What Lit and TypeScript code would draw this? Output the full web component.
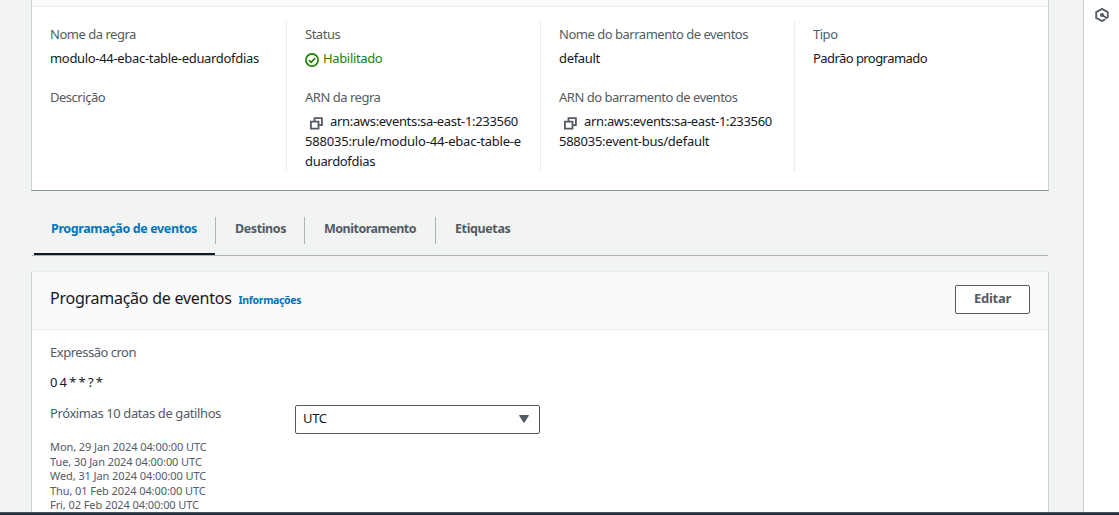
import { LitElement, html, css } from "lit";
import { customElement } from "lit/decorators.js";

const copyIcon = html`<svg class="copy" viewBox="0 0 14 14" width="14" height="14" fill="none" stroke="#545b64" stroke-width="1.8">
  <path d="M.9 4.6h7.6v7.1H.9zM4.5 4.6V1.1h7.4v7H8.6" />
</svg>`;

const dates = [
  "Mon, 29 Jan 2024 04:00:00 UTC",
  "Tue, 30 Jan 2024 04:00:00 UTC",
  "Wed, 31 Jan 2024 04:00:00 UTC",
  "Thu, 01 Feb 2024 04:00:00 UTC",
  "Fri, 02 Feb 2024 04:00:00 UTC",
];

@customElement("app-root")
export class AppRoot extends LitElement {
  static styles = css`
    :host {
      display: flex;
      flex-direction: column;
      width: 100%;
      height: 515px;
      overflow: hidden;
      background: #f2f3f3;
      color: #16191f;
      font: 13px/20px "Noto Sans", "Open Sans", sans-serif;
      letter-spacing: -0.32px;
    }
    * { box-sizing: border-box; }
    svg { display: block; flex: none; }
    .shell { display: flex; height: 512px; overflow: hidden; }
    .main { flex: 1; padding: 0 34px 0 31px; min-width: 0; }
    .side {
      width: 36px;
      flex: none;
      background: #fff;
      border-left: 1px solid #c6cccc;
      padding: 8px 0 0 11px;
    }
    .footer { height: 3px; background: #232f3e; border-top: 1px solid #4b5665; }
    .card {
      background: #fff;
      border: 1px solid #c9d0d1;
      border-top-color: #eaeded;
    }
    .summary { height: 191px; border-top: 0; border-bottom-color: #879596; }
    .strip { height: 7px; background: #fafafa; border-bottom: 1px solid #eaeded; }
    .cols { display: grid; grid-template-columns: 255px 254px 254px 1fr; padding-top: 14px; }
    .col { height: 151px; border-right: 1px solid #eaeded; padding: 3px 0 0 18px; }
    .col:last-child { border: 0; }
    .col div + .label { margin-top: 19px; }
    .label { color: #545b64; letter-spacing: -0.48px; }
    .value { margin-top: 4px; }
    .ok { display: flex; gap: 4px; color: #1d8102; letter-spacing: -0.35px; }
    .ok svg { margin-top: 5px; }
    .line { white-space: pre; }
    .loose { letter-spacing: -0.2px; }
    .bus { letter-spacing: -0.25px; }
    .tight { letter-spacing: -0.56px; }
    .first { display: flex; padding-left: 5px; gap: 6px; }
    .copy { margin-top: 6px; }
    .tabs {
      display: flex;
      margin: 26px 1px 0;
      height: 39px;
      border-bottom: 1px solid #aab7b8;
      font-size: 12.5px;
      font-weight: 700;
      letter-spacing: -0.4px;
      color: #545b64;
      padding-left: 2px;
    }
    .tab { position: relative; height: 38px; padding-top: 2px; padding-left: 19px; white-space: nowrap; }
    .tab:not(:last-child)::after {
      content: "";
      position: absolute;
      right: 0;
      top: 0;
      width: 1px;
      height: 27px;
      background: #aab7b8;
    }
    .active { width: 182px; padding-left: 17px; color: #0073bb; letter-spacing: -0.38px; }
    .active::before {
      content: "";
      position: absolute;
      left: 0;
      right: 1px;
      top: 36px;
      height: 2px;
      background: #16191f;
    }
    .t2 { width: 89px; }
    .t3 { width: 131px; letter-spacing: -0.5px; }
    .t4 { letter-spacing: -0.38px; }
    .schedule { margin-top: 15px; height: 260px; }
    .head {
      display: flex;
      height: 58px;
      background: #fafafa;
      border-bottom: 1px solid #eaeded;
      padding: 13px 18px 0;
    }
    .title { margin-top: -1px; font-size: 16px; line-height: 28px; letter-spacing: -0.25px; }
    .info { margin-left: 7px; padding-top: 5px; font-size: 10.5px; font-weight: 700; color: #0073bb; line-height: 20px; letter-spacing: -0.33px; }
    .edit {
      margin-left: auto;
      width: 75px;
      height: 29px;
      background: #fff;
      border: 1px solid #545b64;
      border-radius: 2px;
      text-align: center;
      font-weight: 700;
      line-height: 25px;
      letter-spacing: -0.25px;
      color: #545b64;
    }
    .body { padding: 12px 18px 0; }
    .cron { margin-top: 10px; letter-spacing: -1px; word-spacing: 0.8px; }
    .row { display: flex; margin-top: 13px; height: 29px; }
    .next { width: 245px; margin-top: -2px; letter-spacing: -0.4px; }
    .select {
      display: flex;
      justify-content: space-between;
      width: 245px;
      height: 29px;
      border: 1px solid #545b64;
      border-radius: 2px;
      padding: 2px 10px 0 7px;
    }
    .select svg { margin-top: 4px; }
    .dates { margin-top: 6px; color: #545b64; font-size: 11px; line-height: 14.5px; letter-spacing: -0.08px; }
  `;

  render() {
    return html`
      <div class="shell">
        <div class="main">
          <section class="card summary">
            <div class="strip"></div>
            <div class="cols">
              <div class="col">
                <div class="label">Nome da regra</div>
                <div class="value">modulo-44-ebac-table-eduardofdias</div>
                <div class="label">Descrição</div>
              </div>
              <div class="col">
                <div class="label">Status</div>
                <div class="value ok">
                  <svg width="14" height="14" viewBox="0 0 14 14" fill="none" stroke="#1d8102" stroke-width="1.7">
                    <circle cx="7" cy="7" r="6.1" /><path d="M3.9 7.1l2.2 2.2 4-4.1" />
                  </svg>
                  <span>Habilitado</span>
                </div>
                <div class="label">ARN da regra</div>
                <div class="value">
                  <div class="line first">${copyIcon}<span>arn:aws:events:sa-east-1:233560</span></div>
                  <div class="line loose">588035:rule/modulo-44-ebac-table-e</div>
                  <div class="line">duardofdias</div>
                </div>
              </div>
              <div class="col">
                <div class="label">Nome do barramento de eventos</div>
                <div class="value">default</div>
                <div class="label">ARN do barramento de eventos</div>
                <div class="value">
                  <div class="line first">${copyIcon}<span>arn:aws:events:sa-east-1:233560</span></div>
                  <div class="line bus">588035:event-bus/default</div>
                </div>
              </div>
              <div class="col">
                <div class="label">Tipo</div>
                <div class="value tight">Padrão programado</div>
              </div>
            </div>
          </section>
          <nav class="tabs">
            <div class="tab active">Programação de eventos</div>
            <div class="tab t2">Destinos</div>
            <div class="tab t3">Monitoramento</div>
            <div class="tab t4">Etiquetas</div>
          </nav>
          <section class="card schedule">
            <div class="head">
              <div class="title">Programação de eventos</div>
              <div class="info">Informações</div>
              <div class="edit">Editar</div>
            </div>
            <div class="body">
              <div class="label">Expressão cron</div>
              <div class="cron">0 4 * * ? *</div>
              <div class="row">
                <div class="label next">Próximas 10 datas de gatilhos</div>
                <div class="select">
                  <span>UTC</span>
                  <svg width="10" height="14" viewBox="0 0 10 14"><path d="M.7 3h8.6q.9 0 .5.8L5.6 10.4q-.6.8-1.2 0L.2 3.8Q-.2 3 .7 3z" fill="#545b64" /></svg>
                </div>
              </div>
              <div class="dates">${dates.map((d) => html`<div>${d}</div>`)}</div>
            </div>
          </section>
        </div>
        <aside class="side">
          <svg width="14" height="14" viewBox="0 0 14 14" fill="none" stroke="#545b64" stroke-width="1.8">
            <path d="M10.4 11.2L7 13.1L1.2 9.9V4.1L7 .9l5.8 3.2v5.6M7 7l5.4 3.4" />
            <circle cx="7" cy="7" r="2.1" fill="#545b64" stroke="none" />
          </svg>
        </aside>
      </div>
      <div class="footer"></div>
    `;
  }
}
